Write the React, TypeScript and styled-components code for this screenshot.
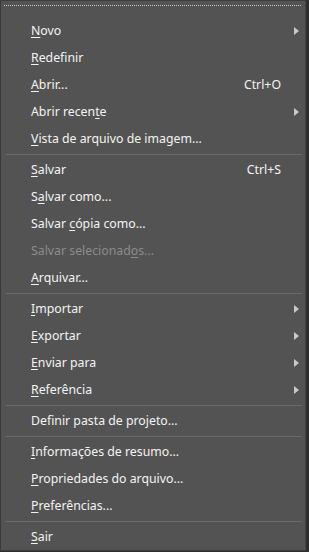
import React from "react";
import styled, { createGlobalStyle } from "styled-components";

const GlobalStyle = createGlobalStyle`
  html, body {
    margin: 0;
    padding: 0;
    background: #2e2e2e;
  }
  body {
    font-family: "Noto Sans", "Open Sans", sans-serif;
    font-size: 12.3px;
  }
`;

type Item =
  | { kind: "sep" }
  | {
      kind: "item";
      label: string;
      key?: number; // index of the mnemonic letter
      shortcut?: string;
      submenu?: boolean;
      disabled?: boolean;
    };

const items: Item[] = [
  { kind: "item", label: "Novo", key: 0, submenu: true },
  { kind: "item", label: "Redefinir", key: 0 },
  { kind: "item", label: "Abrir...", key: 0, shortcut: "Ctrl+O" },
  { kind: "item", label: "Abrir recente", key: 11, submenu: true },
  { kind: "item", label: "Vista de arquivo de imagem...", key: 0 },
  { kind: "sep" },
  { kind: "item", label: "Salvar", key: 0, shortcut: "Ctrl+S" },
  { kind: "item", label: "Salvar como...", key: 1 },
  { kind: "item", label: "Salvar cópia como...", key: 7 },
  { kind: "item", label: "Salvar selecionados...", key: 17, disabled: true },
  { kind: "item", label: "Arquivar...", key: 0 },
  { kind: "sep" },
  { kind: "item", label: "Importar", key: 0, submenu: true },
  { kind: "item", label: "Exportar", key: 0, submenu: true },
  { kind: "item", label: "Enviar para", key: 0, submenu: true },
  { kind: "item", label: "Referência", key: 0, submenu: true },
  { kind: "sep" },
  { kind: "item", label: "Definir pasta de projeto..." },
  { kind: "sep" },
  { kind: "item", label: "Informações de resumo...", key: 0 },
  { kind: "item", label: "Propriedades do arquivo...", key: 0 },
  { kind: "item", label: "Preferências...", key: 0 },
  { kind: "sep" },
  { kind: "item", label: "Sair", key: 0 },
];

const Menu = styled.div`
  width: 306px;
  box-sizing: border-box;
  background: #535353;
  border: 1px solid #3b3b3b;
  border-right-color: #444;
  padding: 0 3px;
  display: flex;
  flex-direction: column;
`;

const Grip = styled.div`
  height: 16px;
  display: flex;
  align-items: flex-start;
  padding-top: 4px;
  box-sizing: border-box;

  &::before {
    content: "";
    flex: 1;
    height: 1px;
    margin-right: 1px;
    background-image: linear-gradient(to right, #c9c9c9 1px, transparent 1px);
    background-size: 2px 1px;
  }
`;

const Row = styled.div<{ $disabled?: boolean }>`
  height: 27px;
  display: flex;
  align-items: center;
  padding-left: 27px;
  padding-right: 3px;
  color: ${(p) => (p.$disabled ? "#8c8c8c" : "#f3f3f3")};
  white-space: nowrap;
`;

const Label = styled.span`
  flex: 1;
`;

const Key = styled.span`
  text-decoration: underline;
  text-underline-offset: 2px;
`;

const Shortcut = styled.span`
  margin-right: 18px;
`;

const Arrow = styled.span`
  width: 0;
  height: 0;
  border-top: 4.5px solid transparent;
  border-bottom: 4.5px solid transparent;
  border-left: 5px solid #c9c9c9;
`;

const Separator = styled.div`
  height: 1px;
  margin: 2px 0 1px 1px;
  background: #6a6a6a;
`;

function renderLabel(label: string, key?: number) {
  if (key === undefined) return label;
  return (
    <>
      {label.slice(0, key)}
      <Key>{label[key]}</Key>
      {label.slice(key + 1)}
    </>
  );
}

export default function App() {
  return (
    <>
      <GlobalStyle />
      <Menu>
        <Grip />
        {items.map((it, i) =>
          it.kind === "sep" ? (
            <Separator key={i} />
          ) : (
            <Row key={i} $disabled={it.disabled}>
              <Label>{renderLabel(it.label, it.key)}</Label>
              {it.shortcut && <Shortcut>{it.shortcut}</Shortcut>}
              {it.submenu && <Arrow />}
            </Row>
          )
        )}
      </Menu>
    </>
  );
}
